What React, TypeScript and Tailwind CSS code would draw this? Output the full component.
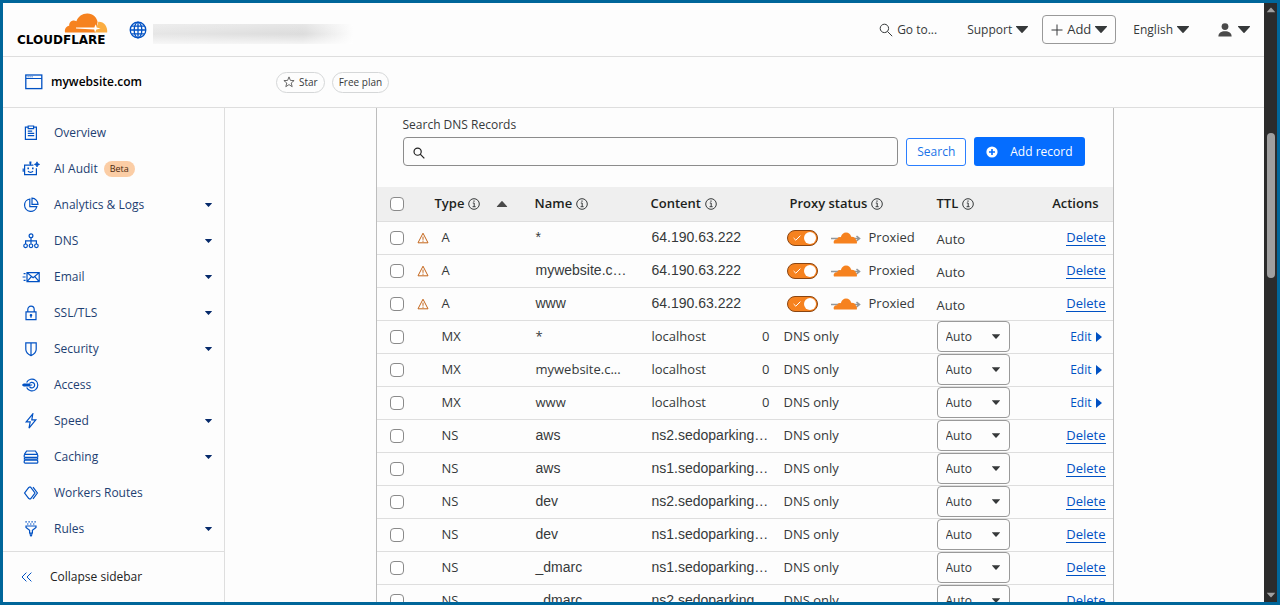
import clsx from "clsx";
import { useState, type ReactNode } from "react";

type DnsRecord = {
  type: "A" | "MX" | "NS";
  name: string;
  content: string;
  priority?: number;
};

const records: DnsRecord[] = [
  { type: "A", name: "*", content: "64.190.63.222" },
  { type: "A", name: "mywebsite.c…", content: "64.190.63.222" },
  { type: "A", name: "www", content: "64.190.63.222" },
  { type: "MX", name: "*", content: "localhost", priority: 0 },
  { type: "MX", name: "mywebsite.c...", content: "localhost", priority: 0 },
  { type: "MX", name: "www", content: "localhost", priority: 0 },
  { type: "NS", name: "aws", content: "ns2.sedoparking…" },
  { type: "NS", name: "aws", content: "ns1.sedoparking…" },
  { type: "NS", name: "dev", content: "ns2.sedoparking…" },
  { type: "NS", name: "dev", content: "ns1.sedoparking…" },
  { type: "NS", name: "_dmarc", content: "ns1.sedoparking…" },
  { type: "NS", name: "_dmarc", content: "ns2.sedoparking…" },
];

function NavIcon({ children }: { children: ReactNode }) {
  return (
    <svg
      viewBox="0 0 18 16"
      className="h-4 w-[18px] shrink-0"
      fill="none"
      stroke="#0051c3"
      strokeWidth="1.2"
      aria-hidden="true"
    >
      {children}
    </svg>
  );
}

const navItems: { label: string; icon: ReactNode; beta?: boolean; expandable?: boolean }[] = [
  {
    label: "Overview",
    icon: (
      <>
        <path d="M6 2.2H3.4v12.2h11V2.2h-2.400" />
        <path d="M6.2 1h5.400v2.600H6.2zM5.800 6.2h4.400M5.800 8.400h6.400M5.800 10.600h6.400" />
      </>
    ),
  },
  {
    label: "AI Audit",
    beta: true,
    icon: (
      <>
        <path d="M11.400 4.200H2.600v9.400h11.800V7.200M8.400 4.200V2M1.200 7.400v3.400M6 10.200c1.200 1.600 3.800 1.600 5 0" />
        <path d="M7.400.6h2v2.200h-2zM5.400 6.600H7v1.600H5.400zM10 6.600h1.600v1.600H10z" fill="#0051c3" stroke="none" />
        <path
          d="M15 .8l.8 1.800 1.800.8-1.800.8-.8 1.800-.8-1.800-1.800-.8 1.800-.8z"
          fill="#0051c3"
          strokeWidth=".8"
        />
      </>
    ),
  },
  {
    label: "Analytics & Logs",
    expandable: true,
    icon: (
      <>
        <path d="M7.800 2a6.200 6.200 0 1 0 7 7.600h-7z" />
        <path d="M10 1.200v6.200h6A6.200 6.200 0 0 0 10 1.200z" />
      </>
    ),
  },
  {
    label: "DNS",
    expandable: true,
    icon: (
      <>
        <circle cx="9" cy="2.8" r="1.9" />
        <path d="M9 4.800v6M3.600 11V7.800h10.800V11" />
        <circle cx="3.6" cy="12.8" r="1.8" />
        <circle cx="9" cy="12.8" r="1.8" />
        <circle cx="14.4" cy="12.8" r="1.8" />
      </>
    ),
  },
  {
    label: "Email",
    expandable: true,
    icon: (
      <path d="M5 3.600h12.200v9H5zM5 3.600l6.100 5 6.100-5M5 12.600l4.400-5M17.200 12.600l-4.400-5M1.600 4.600h2M.6 8h3M1.600 11.400h2" />
    ),
  },
  {
    label: "SSL/TLS",
    expandable: true,
    icon: (
      <>
        <path d="M4 6.800h10v7.800H4zM5.800 6.800V4.400a3.200 3.200 0 0 1 6.400 0v2.400M9 10.400v2.400" />
        <circle cx="9" cy="10.2" r=".7" fill="#0051c3" />
      </>
    ),
  },
  {
    label: "Security",
    expandable: true,
    icon: <path d="M3.800 1.800h10.400v6.400c0 3-2.400 5.200-5.200 6.400-2.800-1.200-5.200-3.400-5.200-6.400zM9 1.800v12.600" />,
  },
  {
    label: "Access",
    icon: (
      <>
        <path d="M4.600 5.400a5.900 5.900 0 1 1 0 5.200" />
        <path d="M7.600 6.400a2.800 2.800 0 1 1 0 3.400" />
        <path d="M.6 8h9.600M2.400 6.600L.6 8l1.800 1.400M2.400 7h5.600M2.400 9h6" />
      </>
    ),
  },
  {
    label: "Speed",
    expandable: true,
    icon: <path d="M10.800.8L4.200 8.800h4L7 15.200l6.800-8.400h-4z" />,
  },
  {
    label: "Caching",
    expandable: true,
    icon: (
      <>
        <path d="M2.400 5.400L4.600 2h8.800l2.200 3.400" />
        <rect x="2.2" y="5.4" width="13.6" height="3" rx="1" />
        <path d="M2.400 8.400v1.800h13.200V8.400" />
        <rect x="2.2" y="11.2" width="13.6" height="3" rx="1" />
      </>
    ),
  },
  {
    label: "Workers Routes",
    icon: <path d="M7 2.200L2.600 8 7 13.800M7 2.200h1.600L13 8l-4.400 5.800H7M11 2.200L15.400 8 11 13.800" />,
  },
  {
    label: "Rules",
    expandable: true,
    icon: (
      <>
        <path d="M4 5h10v1.400L10.400 9.400v2.800H7.600V9.400L4 6.400zM9 12v2.600" />
        <path d="M3.400.8h11.400" strokeDasharray="1.4 1.6" />
        <path d="M5 3h8" strokeDasharray="1.4 1.6" />
        <path d="M7.200 13.400h3.600L9 16z" fill="#0051c3" stroke="none" />
      </>
    ),
  },
];

function Caret({ className }: { className: string }) {
  return (
    <svg viewBox="0 0 12 7" className={className} fill="currentColor" aria-hidden="true">
      <path d="M.6 0h10.800a.5.5 0 0 1 .4.9L6.500 6.700a.7.7 0 0 1-1 0L.2.9A.5.5 0 0 1 .6 0z" />
    </svg>
  );
}

function SearchIcon({ className }: { className: string }) {
  return (
    <svg viewBox="0 0 14 14" className={className} fill="none" stroke="currentColor" aria-hidden="true">
      <circle cx="5.4" cy="5.4" r="4.2" />
      <path d="M8.400 8.400l4.800 4.800" />
    </svg>
  );
}

function InfoIcon() {
  return (
    <svg viewBox="0 0 12 12" className="size-3" fill="none" stroke="#36393a" aria-hidden="true">
      <circle cx="6" cy="6" r="5.3" />
      <path d="M4.800 5h1.400v3.600M4.600 8.700h3" />
      <path d="M5.400 2.600h1.200v1.200H5.400z" fill="#36393a" stroke="none" />
    </svg>
  );
}

function Logo() {
  return (
    <a href="#home" className="flex w-[91px] shrink-0 flex-col items-end text-black">
      <svg viewBox="0 0 44 20" className="h-5 w-11" aria-hidden="true">
        <path
          d="M1 19.600c-.6-3.600 1-6.200 4.200-6.800C4.800 8.600 9 6.200 12.400 8.200 14.200 3 18.600.2 23.600.4c5.400.2 9.200 3.600 10 8.600L31.200 19.600z"
          fill="#f6821f"
        />
        <path d="M34.400 8.800c5.200-.4 9.400 4.400 8.800 10.800H30.400l2-5z" fill="#fbad41" />
        <path d="M12 14.600h18.400l1-3.400 1.200 3.400 4 1-4.200 1-1.400 2.800-.8-2.800L12 15.600z" fill="#fff" />
      </svg>
      <span className="w-full font-['DejaVu_Sans'] text-xs leading-[14px] font-bold">CLOUDFLARE</span>
    </a>
  );
}

function TopBar() {
  return (
    <header className="flex h-[54px] shrink-0 items-center border-b border-[#dedede] px-3.5 text-xs text-[#36393a]">
      <Logo />
      <svg
        viewBox="0 0 18 18"
        className="ml-[21px] size-[18px] shrink-0"
        fill="none"
        stroke="#0051c3"
        strokeWidth="1.3"
        aria-hidden="true"
      >
        <circle cx="9" cy="9" r="7.8" />
        <ellipse cx="9" cy="9" rx="3.8" ry="7.8" />
        <path d="M9 1.200v15.600M1.200 9h15.600M2.400 5.200h13.200M2.400 12.800h13.200" />
      </svg>
      <div className="mt-2 ml-1.5 h-5 w-[200px] bg-linear-to-r from-[#e6e6e6] via-[#dcdcdc] via-75% to-transparent">
        <div className="h-full bg-linear-to-b from-white/30 via-transparent to-white/70" />
      </div>
      <div className="ml-auto flex items-center">
        <button className="flex items-center gap-1">
          <SearchIcon className="size-3.5" />
          Go to...
        </button>
        <button className="ml-[30px] flex items-center gap-1">
          Support
          <Caret className="h-[7px] w-3" />
        </button>
        <button className="ml-3.5 flex h-[29px] items-center gap-1 rounded border border-[#999] px-2 text-[13px]">
          <svg viewBox="0 0 12 12" className="size-3" stroke="currentColor" aria-hidden="true">
            <path d="M6 .5v11M.5 6h11" />
          </svg>
          Add
          <Caret className="h-[7px] w-3" />
        </button>
        <button className="ml-[17px] flex items-center gap-1">
          English
          <Caret className="h-[7px] w-3" />
        </button>
        <button className="ml-[29px] flex items-center gap-1.5" aria-label="Account">
          <svg viewBox="0 0 14 14" className="size-3.5" fill="#4a4a4a" aria-hidden="true">
            <circle cx="7" cy="3.6" r="3.4" />
            <path d="M.4 13.400C.4 9.800 3.200 8.200 7 8.200s6.600 1.600 6.600 5.200z" />
          </svg>
          <Caret className="h-[7px] w-3" />
        </button>
      </div>
    </header>
  );
}

function SiteBar() {
  return (
    <div className="flex h-[51px] shrink-0 items-center border-b border-[#dedede] pl-[22px]">
      <svg viewBox="0 0 18 16" className="h-4 w-[18px]" fill="none" stroke="#0051c3" aria-hidden="true">
        <rect x=".8" y="1" width="16" height="13.6" strokeWidth="1.3" />
        <path d="M1 4.500h16" />
        <path d="M2.600 2.800h5" strokeDasharray="1 1" />
      </svg>
      <h1 className="ml-2 w-[225px] text-xs font-semibold text-black">mywebsite.com</h1>
      <button className="flex h-[21px] items-center gap-1 rounded-full border border-[#d5d7d8] px-1.5 text-[10px] text-[#36393a]">
        <svg viewBox="0 0 12 12" className="size-3" fill="none" stroke="#595959" strokeWidth=".9" aria-hidden="true">
          <path d="M6 .9l1.400 3.500 3.700.2-2.900 2.400 1 3.700L6 8.600l-3.200 2.100 1-3.700L.9 4.600l3.700-.2z" />
        </svg>
        Star
      </button>
      <span className="ml-[7px] flex h-[21px] items-center rounded-full border border-[#d5d7d8] px-1.5 text-[10px] text-[#36393a]">
        Free plan
      </span>
    </div>
  );
}

function Sidebar() {
  return (
    <aside className="flex w-[222px] shrink-0 flex-col border-r border-[#dedede] text-xs">
      <nav className="min-h-0 flex-1 overflow-hidden pt-[7px]">
        {navItems.map((item) => (
          <a
            key={item.label}
            href={`#${item.label}`}
            className="flex h-9 items-center pr-3 pl-[19px] text-[#1d3f72]"
          >
            <NavIcon>{item.icon}</NavIcon>
            <span className="ml-3.5">{item.label}</span>
            {item.beta && (
              <span className="ml-1.5 flex h-4 items-center rounded-full bg-[#fbcda5] px-1.5 text-[9px] text-[#4b2a10]">
                Beta
              </span>
            )}
            {item.expandable && <Caret className="ml-auto h-1 w-[7px] text-[#062a6b]" />}
          </a>
        ))}
      </nav>
      <button className="flex h-[51px] shrink-0 items-center gap-[17px] border-t border-[#dedede] pl-[18px] text-[#222]">
        <svg viewBox="0 0 12 10" className="h-2.5 w-3" fill="none" stroke="#0051c3" aria-hidden="true">
          <path d="M5.400.6L1 5l4.400 4.400M10.400.6L6 5l4.400 4.400" />
        </svg>
        Collapse sidebar
      </button>
    </aside>
  );
}

const checkboxStyle =
  "block size-3.5 appearance-none rounded border border-[#8a8a8a] bg-white checked:border-[#0051c3] checked:bg-[#0051c3]";

function HeadCell({ children, className, span }: { children: ReactNode; className?: string; span?: number }) {
  return (
    <th colSpan={span} className={clsx("p-0 text-left font-semibold", className)}>
      <span className="flex items-center gap-1">
        {children}
        <InfoIcon />
      </span>
    </th>
  );
}

function ProxyToggle({ label }: { label: string }) {
  const [on, setOn] = useState(true);

  return (
    <div className="flex items-center pl-[3px]">
      <label className="relative block h-4 w-[31px]">
        <input
          type="checkbox"
          role="switch"
          aria-label={label}
          checked={on}
          onChange={() => setOn(!on)}
          className="peer block h-4 w-[31px] appearance-none rounded-full border border-[#8a4511] bg-gray-400 checked:bg-[#f6821f]"
        />
        <span className="absolute top-0.5 left-0.5 size-3 rounded-full bg-white peer-checked:left-[17px]" />
        <svg
          viewBox="0 0 8 6"
          className="absolute top-[5px] left-1.5 hidden h-1.5 w-2 peer-checked:block"
          fill="none"
          stroke="#fff"
          aria-hidden="true"
        >
          <path d="M.6 3l2.200 2.200L7.400.6" />
        </svg>
      </label>
      <svg viewBox="0 0 31 12" className="mr-2 ml-3 h-3 w-[31px]" aria-hidden="true">
        <path d="M1 6.500h28M26.500 4l3 2.500-3 2.500" fill="none" stroke="#92979b" strokeWidth="1.6" />
        <path
          d="M4 11.600c-1-3 .8-4.600 3.200-4.400.2-1.800 2-2.600 3.600-2C11.800 2.200 13.600.6 16 .6c2.800 0 4.600 1.600 5.200 4.200 2.800-.2 4.600 1.400 4.800 3.200 1 .6 1.200 2.200.8 3.600z"
          fill="#f6821f"
        />
      </svg>
      Proxied
    </div>
  );
}

function RecordRow({ record }: { record: DnsRecord }) {
  const proxied = record.type === "A";
  const isMx = record.type === "MX";
  const textCell = clsx("p-0 pl-px whitespace-nowrap", !isMx && "pb-0.5 font-['Liberation_Sans'] text-sm");

  return (
    <tr className="h-[33px] border-b border-[#dedede]">
      <td className="p-0 pl-[13px]">
        <input type="checkbox" aria-label={`Select ${record.type} ${record.name}`} className={checkboxStyle} />
      </td>
      <td className="p-0 pl-1.5">
        {proxied && (
          <svg viewBox="0 0 12 12" className="size-3" fill="none" stroke="#c4651a" aria-label="Warning">
            <path d="M6 1.200l5 9.600H1zM6 4.600v3.200M6 8.600v1.200" />
          </svg>
        )}
      </td>
      <td className="p-0 pl-[7px]">{record.type}</td>
      <td className={textCell}>{record.name}</td>
      <td className={textCell} colSpan={isMx ? 1 : 2}>
        {record.content}
      </td>
      {isMx && <td className="p-0 text-right">{record.priority}</td>}
      <td className="p-0 pl-3.5">
        {proxied ? <ProxyToggle label={`Proxy ${record.name}`} /> : "DNS only"}
      </td>
      <td className={clsx("p-0", proxied && "pt-1")}>
        {proxied ? (
          "Auto"
        ) : (
          <div className="relative w-[73px]">
            <select
              aria-label={`TTL ${record.name}`}
              className="block h-[31px] w-full appearance-none rounded border border-[#999] bg-[#fdfdfd] pl-2 text-xs"
            >
              <option>Auto</option>
            </select>
            <Caret className="pointer-events-none absolute top-[13px] right-2.5 h-[5px] w-2" />
          </div>
        )}
      </td>
      <td className="p-0 pr-[7px] text-right text-[#0051c3]">
        {isMx ? (
          <button className="mr-1 inline-flex items-center gap-1 text-xs">
            Edit
            <svg viewBox="0 0 6 10" className="h-2.5 w-1.5" fill="currentColor" aria-hidden="true">
              <path d="M0 0l6 5-6 5z" />
            </svg>
          </button>
        ) : (
          <button className="border-b border-[#0051c3] leading-4">Delete</button>
        )}
      </td>
    </tr>
  );
}

function RecordsPanel() {
  return (
    <section className="mx-auto w-full max-w-[738px] border-x border-[#bdbdbd]">
      <form className="pt-2 pr-7 pl-[26px]" onSubmit={(e) => e.preventDefault()}>
        <label htmlFor="dns-search" className="block text-xs leading-[18px] text-[#36393a]">
          Search DNS Records
        </label>
        <div className="mt-[3px] flex items-center gap-2">
          <div className="relative flex-1">
            <input
              id="dns-search"
              type="text"
              className="block h-[29px] w-full rounded border border-[#8c8c8c] pr-2 pl-8 text-[13px]"
            />
            <SearchIcon className="absolute top-2.5 left-2.5 size-3 stroke-[1.4] text-[#222]" />
          </div>
          <button
            type="submit"
            className="h-7 rounded-[3px] border border-[#2b7fff] bg-white px-2.5 text-xs text-[#1a73e8]"
          >
            Search
          </button>
          <button
            type="button"
            className="flex h-[29px] items-center gap-3 rounded-[3px] bg-[#056dff] px-3 text-xs text-white"
          >
            <svg viewBox="0 0 12 12" className="size-3" aria-hidden="true">
              <circle cx="6" cy="6" r="5.6" fill="#fff" />
              <path d="M6 3v6M3 6h6" stroke="#056dff" strokeWidth="1.6" />
            </svg>
            Add record
          </button>
        </div>
      </form>

      <table className="mt-[21px] w-full table-fixed border-collapse text-[13px] text-[#36393a]">
        <colgroup>
          <col className="w-[34px]" />
          <col className="w-6" />
          <col className="w-[100px]" />
          <col className="w-[116px]" />
          <col className="w-[100px]" />
          <col className="w-[19px]" />
          <col className="w-[167px]" />
          <col className="w-[84px]" />
          <col />
        </colgroup>
        <thead>
          <tr className="h-[34px] border-b border-[#dedede] bg-[#efefef] text-[#1d1f20]">
            <th className="p-0 pl-[13px]">
              <input type="checkbox" aria-label="Select all records" className={checkboxStyle} />
            </th>
            <th className="p-0" />
            <th className="p-0 text-left font-semibold">
              <button className="flex items-center gap-1">
                Type
                <InfoIcon />
                <Caret className="ml-3 h-1.5 w-3 rotate-180 text-[#4a4a4a]" />
              </button>
            </th>
            <HeadCell>Name</HeadCell>
            <HeadCell span={2}>Content</HeadCell>
            <HeadCell className="pl-5">Proxy status</HeadCell>
            <HeadCell>TTL</HeadCell>
            <th className="p-0 pr-3.5 text-right font-semibold">Actions</th>
          </tr>
        </thead>
        <tbody>
          {records.map((record, i) => (
            <RecordRow key={i} record={record} />
          ))}
        </tbody>
      </table>
    </section>
  );
}

function ScrollTrack() {
  return (
    <div className="flex w-[13px] shrink-0 flex-col items-center bg-[#2b2b2b] py-1 text-[#a0a0a0]" aria-hidden="true">
      <Caret className="h-1.5 w-2 rotate-180" />
      <div className="mt-[120px] h-[145px] w-2 rounded-full bg-[#9f9f9f]" />
      <Caret className="mt-auto h-1.5 w-2" />
    </div>
  );
}

export default function App() {
  return (
    <div className="flex h-screen overflow-hidden border-[3px] border-[#00669a] bg-[#fdfdfd] font-['Open_Sans','Noto_Sans',sans-serif]">
      <div className="flex min-w-0 flex-1 flex-col">
        <TopBar />
        <SiteBar />
        <div className="flex min-h-0 flex-1">
          <Sidebar />
          <main className="min-w-0 flex-1 overflow-hidden">
            <RecordsPanel />
          </main>
        </div>
      </div>
      <ScrollTrack />
    </div>
  );
}
